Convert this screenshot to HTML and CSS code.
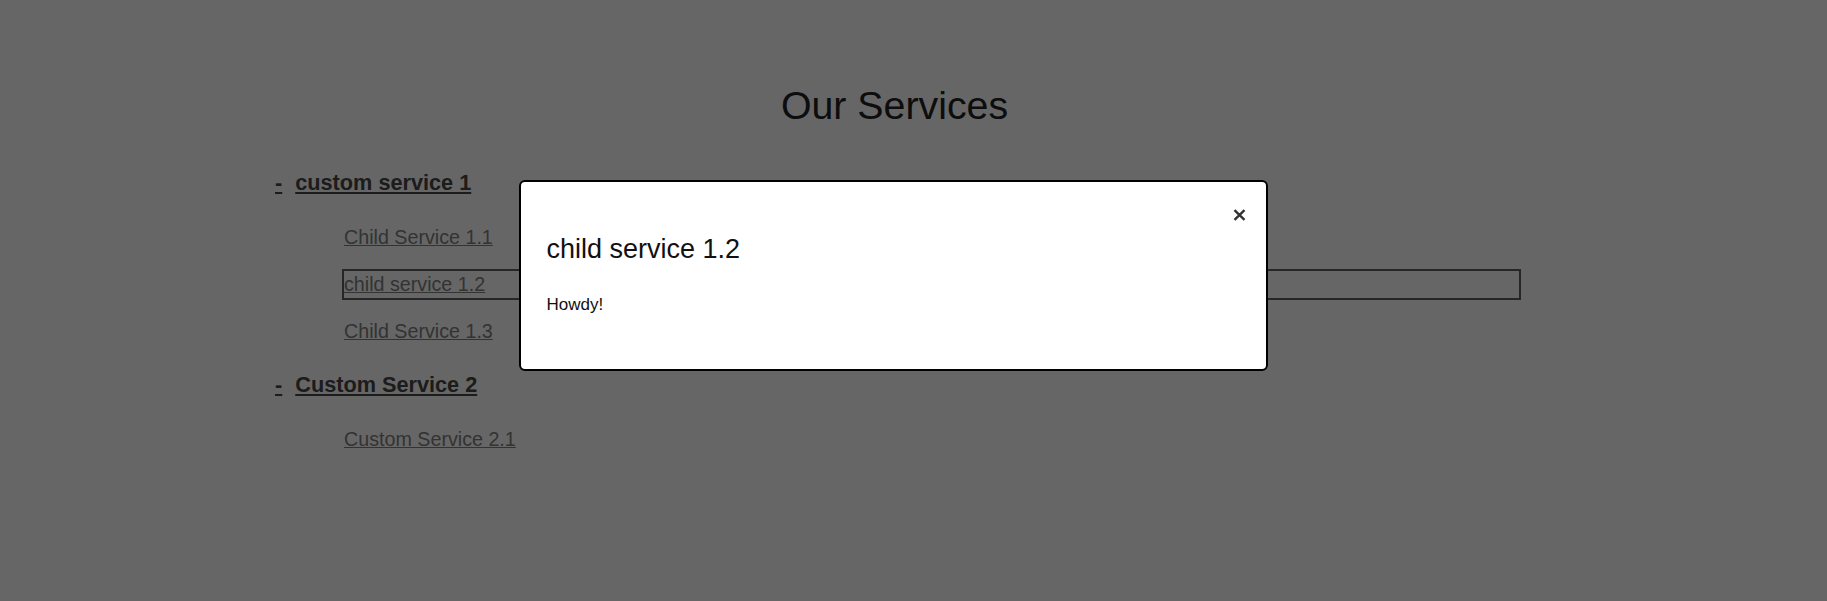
FILE: index.html
```html
<!DOCTYPE html>
<html lang="en">
<head>
<meta charset="utf-8">
<title>Our Services</title>
<link rel="stylesheet" href="styles.css">
</head>
<body>
<main class="page">
  <h1 class="title">Our Services</h1>
  <ul class="services">
    <li class="service">
      <div class="service-head">
        <a class="toggle" href="#">-</a>
        <a class="service-name" href="#">custom service 1</a>
      </div>
      <ul class="children">
        <li><a class="child" href="#">Child Service 1.1</a></li>
        <li><a class="child is-focused" href="#">child service 1.2</a></li>
        <li><a class="child" href="#">Child Service 1.3</a></li>
      </ul>
    </li>
    <li class="service">
      <div class="service-head">
        <a class="toggle" href="#">-</a>
        <a class="service-name" href="#">Custom Service 2</a>
      </div>
      <ul class="children">
        <li><a class="child" href="#">Custom Service 2.1</a></li>
      </ul>
    </li>
  </ul>
</main>
<div class="overlay"></div>
<div class="modal" role="dialog" aria-label="child service 1.2">
  <button class="close" type="button" aria-label="Close">
    <svg width="13" height="12" viewBox="0 0 13 12" aria-hidden="true">
      <path d="M1.5 1.2 L11.5 10.8 M11.5 1.2 L1.5 10.8" stroke="#333" stroke-width="2.4" stroke-linecap="butt" fill="none"/>
    </svg>
  </button>
  <h2 class="modal-title">child service 1.2</h2>
  <p class="modal-body">Howdy!</p>
</div>
</body>
</html>
```

FILE: styles.css
```css
html, body {
  margin: 0;
  padding: 0;
  background: #ffffff;
  font-family: "Liberation Sans", Arial, sans-serif;
}

.page {
  padding: 83px 306px 0 268px;
}

.title {
  margin: 0 0 42px;
  text-align: center;
  font-size: 39.3px;
  font-weight: normal;
  line-height: 45px;
  color: #222;
}

.services {
  list-style: none;
  margin: 0;
  padding: 0 0 0 7px;
}

.service-head {
  display: flex;
  align-items: baseline;
  gap: 13px;
  font-size: 21.7px;
  font-weight: bold;
  line-height: 25px;
}

.toggle,
.service-name {
  color: #474747;
  text-decoration: underline;
}

.children {
  list-style: none;
  margin: 29px 0 27px;
  padding: 0 2px 0 69px;
  display: flex;
  flex-direction: column;
  gap: 20px;
}

.child {
  display: block;
  font-size: 19.7px;
  line-height: 27px;
  color: #808080;
  text-decoration: underline;
}

.child.is-focused {
  outline: 2px solid #606060;
}

.overlay {
  position: fixed;
  inset: 0;
  background: rgba(0, 0, 0, 0.6);
}

.modal {
  position: absolute;
  left: 519px;
  top: 180px;
  width: 749px;
  box-sizing: border-box;
  padding: 52px 25px 54px 25.5px;
  background: #fff;
  border: 2px solid #000;
  border-radius: 6px;
}

.close {
  position: absolute;
  top: 27px;
  right: 20px;
  padding: 0;
  margin: 0;
  border: 0;
  background: none;
  width: 13px;
  height: 12px;
  display: block;
}

.close svg {
  display: block;
}

.modal-title {
  margin: 0;
  font-size: 27px;
  font-weight: normal;
  line-height: 31px;
  color: #111;
}

.modal-body {
  margin: 30px 0 0;
  font-size: 17px;
  line-height: 20px;
  color: #111;
}
```
